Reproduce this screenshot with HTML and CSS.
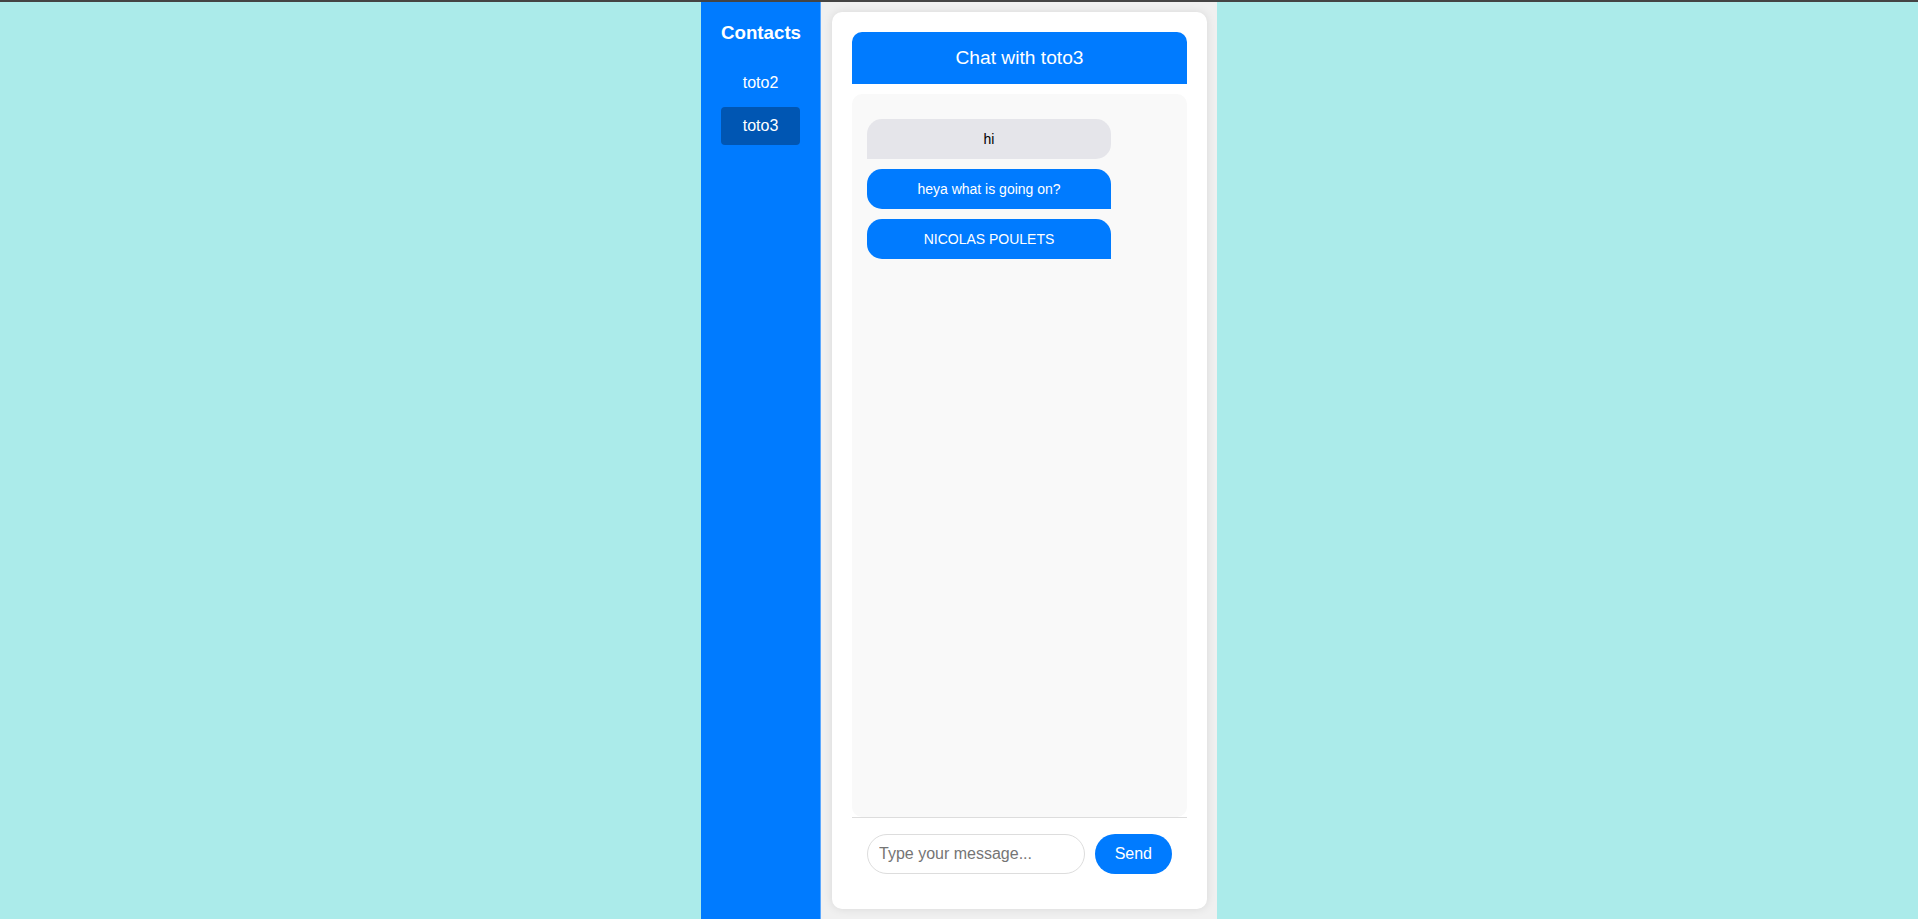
FILE: index.html
```html
<!DOCTYPE html>
<html lang="en">
<head>
<meta charset="utf-8">
<title>Chat</title>
<link rel="stylesheet" href="styles.css">
</head>
<body>
<div class="app">
  <aside class="sidebar">
    <h3 class="sidebar-title">Contacts</h3>
    <ul class="contact-list">
      <li class="contact">toto2</li>
      <li class="contact active">toto3</li>
    </ul>
  </aside>
  <main class="main">
    <section class="chat-card">
      <header class="chat-header">Chat with toto3</header>
      <div class="messages">
        <div class="bubble received">hi</div>
        <div class="bubble sent">heya what is going on?</div>
        <div class="bubble sent">NICOLAS POULETS</div>
      </div>
      <form class="composer">
        <input class="composer-input" type="text" placeholder="Type your message...">
        <button class="send-btn" type="button">Send</button>
      </form>
    </section>
  </main>
</div>
</body>
</html>
```
FILE: styles.css
```css
* { box-sizing: border-box; }
html, body { height: 100%; }
body {
  margin: 0;
  background: #abebea;
  border-top: 2px solid #444;
  font-family: "Liberation Sans", Arial, sans-serif;
  overflow: hidden;
}
.app {
  display: flex;
  justify-content: center;
  height: calc(100vh - 2px);
}
.sidebar {
  flex: 0 0 120px;
  width: 120px;
  background: #007bff;
  color: #fff;
  padding: 20px;
  border-right: 1px solid #5aa8ff;
}
.sidebar-title {
  margin: 0 0 20px;
  font-size: 18.72px;
  line-height: 22px;
  font-weight: bold;
  text-align: center;
}
.contact-list {
  list-style: none;
  margin: 0;
  padding: 0;
  display: flex;
  flex-direction: column;
  gap: 5px;
}
.contact {
  height: 38px;
  line-height: 38px;
  text-align: center;
  font-size: 16px;
  border-radius: 4px;
}
.contact.active { background: #0056b3; }
.main {
  flex: 0 0 396px;
  width: 396px;
  background: #f0f0f0;
  padding: 10px 10px 10px 11px;
  display: flex;
}
.chat-card {
  flex: 1;
  min-width: 0;
  background: #fff;
  border-radius: 10px;
  box-shadow: 0 0 10px rgba(0, 0, 0, 0.1);
  padding: 20px;
  display: flex;
  flex-direction: column;
}
.chat-header {
  background: #007bff;
  color: #fff;
  height: 52px;
  line-height: 52px;
  text-align: center;
  font-size: 19.2px;
  border-radius: 10px 10px 0 0;
  margin-bottom: 10px;
}
.messages {
  flex: 1;
  background: #f9f9f9;
  border-radius: 10px;
  padding: 25px 15px 15px;
  display: flex;
  flex-direction: column;
  gap: 10px;
}
.bubble {
  width: 80%;
  height: 40px;
  line-height: 40px;
  text-align: center;
  font-size: 14px;
  border-radius: 15px;
}
.bubble.received {
  background: #e5e5ea;
  color: #000;
  border-bottom-left-radius: 0;
}
.bubble.sent {
  background: #007bff;
  color: #fff;
  border-bottom-right-radius: 0;
}
.composer {
  margin: 0;
  border-top: 1px solid #ddd;
  padding: 16px 15px 15px;
  display: flex;
  gap: 10px;
}
.composer-input {
  flex: 1 1 0;
  width: 0;
  min-width: 0;
  height: 40px;
  border: 1px solid #ddd;
  border-radius: 20px;
  padding: 0 11px;
  font-family: "Liberation Sans", Arial, sans-serif;
  font-size: 16px;
  outline: none;
}
.composer-input::placeholder { color: #757575; }
.send-btn {
  flex: 0 0 auto;
  height: 40px;
  border: none;
  border-radius: 20px;
  background: #007bff;
  color: #fff;
  padding: 0 20px;
  font-family: "Liberation Sans", Arial, sans-serif;
  font-size: 16px;
}
```
